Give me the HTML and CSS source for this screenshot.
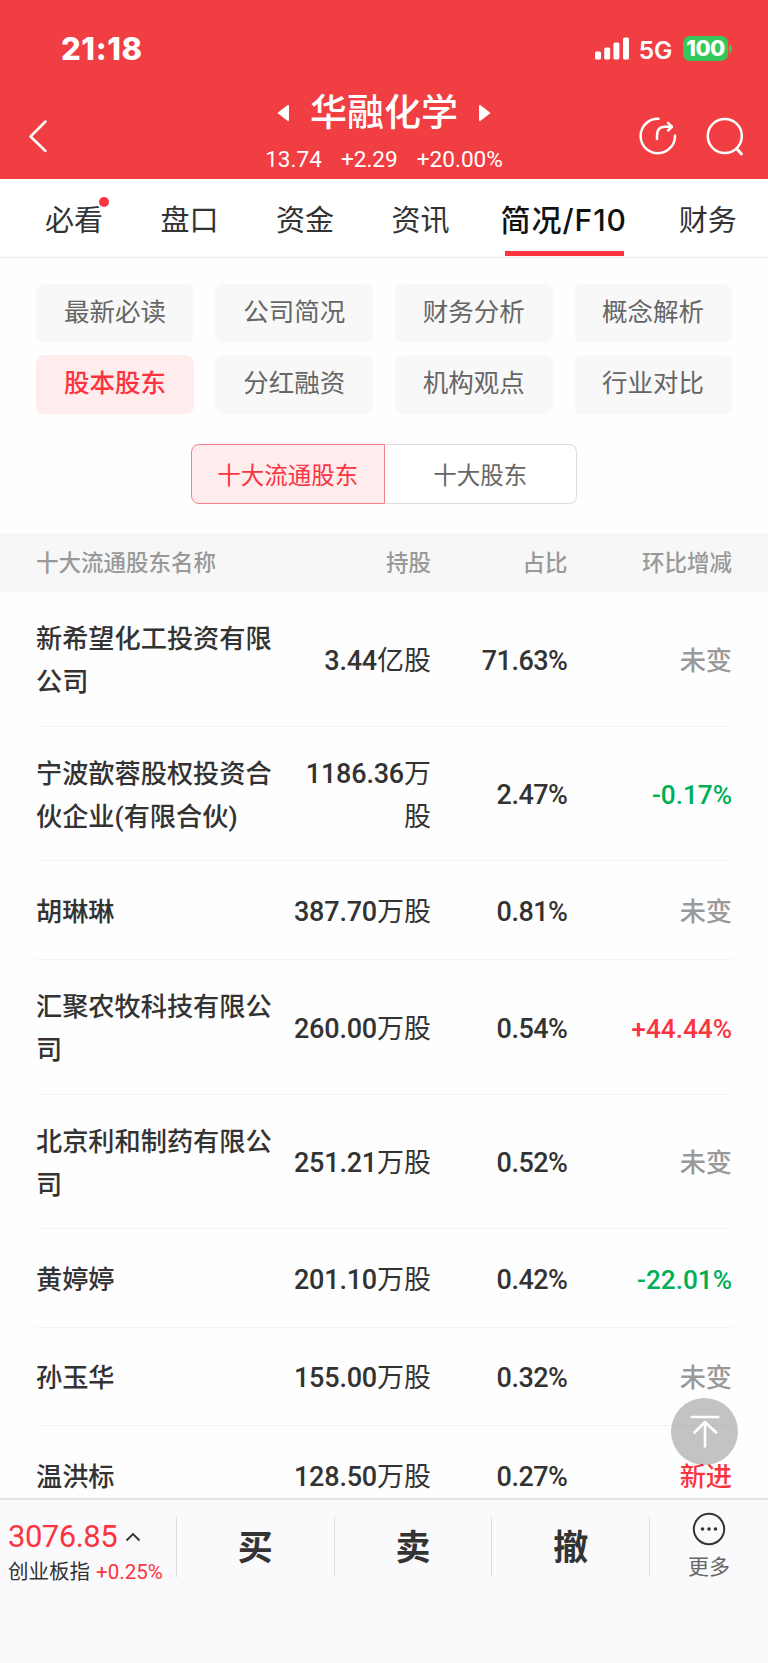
FILE: index.html
```html
<!DOCTYPE html>
<html lang="zh-CN">
<head>
    <meta charset="UTF-8">
    <meta name="viewport" content="width=device-width, initial-scale=1.0">
    <title>华融化学 - 股本股东</title>
    <link rel="stylesheet" href="styles.css">
</head>
<body>
    <header class="header">
        <div class="status-bar">
            <span class="clock">21:18</span>
            <div class="status-right">
                <svg class="signal" width="34" height="23" viewBox="0 0 34 23" fill="#fff">
                    <rect x="0" y="14.500" width="6" height="8" rx="1.600"/>
                    <rect x="9.200" y="10.500" width="6" height="12" rx="1.600"/>
                    <rect x="18.400" y="5.500" width="6" height="17" rx="1.600"/>
                    <rect x="28" y="0.500" width="6" height="22" rx="1.600"/>
                </svg>
                <span class="network">5G</span>
                <span class="battery">100</span>
                <span class="battery-tip"></span>
            </div>
        </div>
        <div class="title-bar">
            <div class="title-left">
                <svg width="20" height="34" viewBox="0 0 20 34" fill="none" stroke="#fff" stroke-width="2.500" stroke-linecap="round" stroke-linejoin="round">
                    <path d="M17.500 2.500L2.500 17.500L17.500 32"/>
                </svg>
            </div>
            <div class="title-center">
                <div class="stock-row">
                    <svg width="13" height="18" viewBox="0 0 13 18" fill="#fff" stroke="#fff" stroke-width="1.500" stroke-linejoin="round"><path d="M11.200 1.700V16.300L1.500 9Z"/></svg>
                    <h1>华融化学</h1>
                    <svg width="13" height="18" viewBox="0 0 13 18" fill="#fff" stroke="#fff" stroke-width="1.500" stroke-linejoin="round"><path d="M1.800 1.700V16.300L11.500 9Z"/></svg>
                </div>
                <div class="quote">
                    <span>13.74</span>
                    <span>+2.29</span>
                    <span>+20.00%</span>
                </div>
            </div>
            <div class="title-right">
                <svg width="38" height="38" viewBox="0 0 38 38" fill="none" stroke="#fff" stroke-width="2.500" stroke-linecap="round" stroke-linejoin="round">
                    <path d="M19.500 1.800A17.200 17.200 0 1 0 36 18.500"/>
                    <path d="M18 22V18.500C18 13 21 9.800 26 9.800H32.500"/>
                    <path d="M29 5.800L33 9.800L29 13.500"/>
                </svg>
                <svg width="38" height="40" viewBox="0 0 38 40" fill="none" stroke="#fff" stroke-width="2.500" stroke-linecap="round">
                    <circle cx="18.800" cy="19" r="17"/>
                    <path d="M30.500 31.500L35.500 37" stroke-width="3"/>
                </svg>
            </div>
        </div>
    </header>

    <nav class="tabs">
        <a class="tab has-dot">必看</a>
        <a class="tab">盘口</a>
        <a class="tab">资金</a>
        <a class="tab">资讯</a>
        <a class="tab active">简况/F10</a>
        <a class="tab">财务</a>
    </nav>

    <main class="content">
        <div class="menu">
            <a class="menu-item">最新必读</a>
            <a class="menu-item">公司简况</a>
            <a class="menu-item">财务分析</a>
            <a class="menu-item">概念解析</a>
            <a class="menu-item active">股本股东</a>
            <a class="menu-item">分红融资</a>
            <a class="menu-item">机构观点</a>
            <a class="menu-item">行业对比</a>
        </div>

        <div class="switch">
            <button class="switch-btn active">十大流通股东</button>
            <button class="switch-btn">十大股东</button>
        </div>

        <div class="row row-head">
            <span>十大流通股东名称</span>
            <span>持股</span>
            <span>占比</span>
            <span>环比增减</span>
        </div>
        <div class="list">
            <div class="row">
                <span class="name">新希望化工投资有限公司</span>
                <span class="shares"><b>3.44</b>亿股</span>
                <span class="ratio">71.63%</span>
                <span class="change">未变</span>
            </div>
            <div class="row">
                <span class="name">宁波歆蓉股权投资合伙企业(有限合伙)</span>
                <span class="shares"><b>1186.36</b>万股</span>
                <span class="ratio">2.47%</span>
                <span class="change down">-0.17%</span>
            </div>
            <div class="row">
                <span class="name">胡琳琳</span>
                <span class="shares"><b>387.70</b>万股</span>
                <span class="ratio">0.81%</span>
                <span class="change">未变</span>
            </div>
            <div class="row">
                <span class="name">汇聚农牧科技有限公司</span>
                <span class="shares"><b>260.00</b>万股</span>
                <span class="ratio">0.54%</span>
                <span class="change up">+44.44%</span>
            </div>
            <div class="row">
                <span class="name">北京利和制药有限公司</span>
                <span class="shares"><b>251.21</b>万股</span>
                <span class="ratio">0.52%</span>
                <span class="change">未变</span>
            </div>
            <div class="row">
                <span class="name">黄婷婷</span>
                <span class="shares"><b>201.10</b>万股</span>
                <span class="ratio">0.42%</span>
                <span class="change down">-22.01%</span>
            </div>
            <div class="row">
                <span class="name">孙玉华</span>
                <span class="shares"><b>155.00</b>万股</span>
                <span class="ratio">0.32%</span>
                <span class="change">未变</span>
            </div>
            <div class="row">
                <span class="name">温洪标</span>
                <span class="shares"><b>128.50</b>万股</span>
                <span class="ratio">0.27%</span>
                <span class="change up">新进</span>
            </div>
        </div>
    </main>

    <div class="back-top">
        <svg width="30" height="34" viewBox="0 0 30 34" fill="none" stroke="#fff" stroke-width="2.600" stroke-linecap="round" stroke-linejoin="round">
            <path d="M1.800 2H28.200M15 31.500V7.500M4.500 17.500L15 7L26 17.500"/>
        </svg>
    </div>

    <footer class="bottom-bar">
        <div class="index">
            <div class="index-value">3076.85
                <svg width="16" height="10" viewBox="0 0 16 10" fill="none" stroke="#333" stroke-width="1.800"><path d="M1.500 8.500L8 2L14.500 8.500"/></svg>
            </div>
            <div class="index-name">创业板指 <span class="index-pct">+0.25%</span></div>
        </div>
        <a class="action">买</a>
        <a class="action">卖</a>
        <a class="action">撤</a>
        <a class="more">
            <svg width="34" height="34" viewBox="0 0 34 34" fill="none" stroke="#333" stroke-width="2">
                <circle cx="17" cy="17" r="15.200"/>
                <g fill="#333" stroke="none"><circle cx="10.500" cy="17" r="1.800"/><circle cx="17" cy="17" r="1.800"/><circle cx="23.500" cy="17" r="1.800"/></g>
            </svg>
            <span>更多</span>
        </a>
    </footer>
</body>
</html>
```
FILE: styles.css
```css
* {
    box-sizing: border-box;
}

body {
    margin: 0;
    height: 1663px;
    overflow: hidden;
    position: relative;
    background-color: #fefefe;
    color: #333;
    font-family: Roboto, "Noto Sans CJK SC", sans-serif;
}

svg {
    display: block;
    flex-shrink: 0;
}

.header {
    height: 179px;
    background-color: #f03e42;
    color: #fff;
}

.status-bar {
    height: 88px;
    padding: 9px 36px 0 61px;
    display: flex;
    justify-content: space-between;
    align-items: center;
    font-family: Inter, sans-serif;
}

.clock {
    font-size: 31px;
    font-weight: 800;
    letter-spacing: 0.6px;
}

.status-right {
    display: flex;
    align-items: center;
}

.network {
    margin: 2px 11px 0 10px;
    font-size: 24.5px;
    font-weight: 600;
    letter-spacing: -0.3px;
}

.battery {
    width: 45px;
    height: 25px;
    line-height: 25px;
    border-radius: 7px;
    background-color: #35c759;
    text-align: center;
    font-size: 22px;
    font-weight: 800;
    letter-spacing: -0.5px;
}

.battery-tip {
    width: 3px;
    height: 8px;
    margin-left: 1px;
    border-radius: 0 4px 4px 0;
    background-color: #35c759;
}

.title-bar {
    height: 91px;
    display: grid;
    grid-template-columns: 180px 1fr 180px;
}

.title-left {
    padding: 31px 0 0 28px;
}

.stock-row {
    height: 50px;
    display: flex;
    justify-content: center;
    align-items: center;
    gap: 20px;
}

.stock-row h1 {
    margin: 0;
    padding-top: 2px;
    font-size: 37px;
    line-height: 50px;
    font-weight: 500;
}

.quote {
    display: flex;
    justify-content: center;
    gap: 19px;
    font-size: 22.6px;
    line-height: 43px;
}

.title-right {
    display: flex;
    gap: 29px;
    padding: 29px 0 0 51px;
}

.tabs {
    height: 79px;
    padding-left: 45px;
    display: flex;
    border-bottom: 1px solid #ebebeb;
    background-color: #fff;
}

.tab {
    position: relative;
    margin-right: 57.5px;
    font-size: 29px;
    line-height: 84px;
    white-space: nowrap;
}

.tab:nth-child(4) {
    margin-right: 51px;
}

.tab.active {
    margin-right: 52px;
    font-family: Inter, "Noto Sans CJK SC", sans-serif;
    font-size: 30px;
    line-height: 82px;
    font-weight: 500;
    letter-spacing: 0.95px;
    color: #111;
}

.tab.active::after {
    content: "";
    position: absolute;
    left: 4px;
    right: 3px;
    bottom: 1px;
    height: 5px;
    background-color: #fb3440;
}

.has-dot::after {
    content: "";
    position: absolute;
    top: 18px;
    right: -6px;
    width: 10px;
    height: 10px;
    border-radius: 50%;
    background-color: #fb3440;
}

.menu {
    padding: 26px 36px 0;
    display: grid;
    grid-template-columns: repeat(4, 158px);
    justify-content: space-between;
    row-gap: 12px;
}

.menu-item {
    height: 59px;
    line-height: 57px;
    border-radius: 8px;
    background-color: #f8f8f8;
    text-align: center;
    font-size: 25.5px;
    color: #666;
}

.menu-item.active {
    background-color: #ffedee;
    color: #fb3440;
    font-weight: 500;
}

.switch {
    width: 386px;
    margin: 30px auto 29px;
    display: flex;
}

.switch-btn {
    flex: 1;
    height: 60px;
    padding: 0 0 1px;
    border: 1px solid #dedede;
    border-left: none;
    border-radius: 0 8px 8px 0;
    background-color: #fff;
    font-family: inherit;
    font-size: 23.5px;
    color: #666;
}

.switch-btn.active {
    border: 1px solid #f98088;
    border-radius: 8px 0 0 8px;
    background-color: #ffedee;
    color: #fb3440;
}

.row {
    min-height: 98.5px;
    padding: 26px 0 21.3px;
    display: grid;
    grid-template-columns: 240px 155px 136.5px 1fr;
    align-items: center;
    border-bottom: 1px solid #f4f4f4;
    font-size: 27px;
    line-height: 43.2px;
    text-align: right;
}

.list {
    padding: 0 36px;
}

.row-head {
    min-height: 59px;
    padding: 2px 36px 0;
    border: none;
    background-color: #f7f7f7;
    color: #999;
    font-size: 22.5px;
    font-weight: 500;
}

.row-head :first-child {
    text-align: left;
}

.name {
    font-size: 26.2px;
    font-weight: 500;
    text-align: left;
}

.shares {
    padding-left: 12px;
}

.shares b {
    font-weight: 500;
    letter-spacing: -0.2px;
}

.ratio {
    font-weight: 500;
    letter-spacing: -0.5px;
}

.change {
    font-size: 26.2px;
    font-weight: 500;
    color: #999;
}

.change.up {
    color: #fb3440;
}

.change.down {
    color: #00ae58;
}

.back-top {
    position: absolute;
    left: 671px;
    top: 1398px;
    width: 67px;
    height: 67px;
    display: flex;
    justify-content: center;
    align-items: center;
    border-radius: 50%;
    background-color: rgba(0, 0, 0, 0.23);
}

.bottom-bar {
    position: absolute;
    left: 0;
    right: 0;
    bottom: 0;
    height: 165px;
    padding-top: 17px;
    display: flex;
    align-items: flex-start;
    border-top: 2px solid #e2e2e6;
    background-color: #fafafc;
}

.index {
    width: 176px;
    padding-left: 8px;
    white-space: nowrap;
}

.index-value {
    display: flex;
    align-items: center;
    gap: 8px;
    font-size: 31px;
    line-height: 39px;
    letter-spacing: -0.5px;
    color: #fb3440;
}

.index-name {
    font-size: 20.5px;
    line-height: 33px;
}

.index-pct {
    margin-left: 1px;
    color: #fb3440;
}

.action {
    width: 157.7px;
    height: 60px;
    line-height: 63px;
    border-left: 1px solid #dcdcdf;
    text-align: center;
    font-size: 35px;
    font-weight: 700;
}

.more {
    flex: 1;
    height: 60px;
    border-left: 1px solid #dcdcdf;
    display: flex;
    flex-direction: column;
    align-items: center;
    font-size: 21px;
    line-height: 30px;
    color: #666;
}

.more svg {
    margin-top: -5px;
    margin-bottom: 6px;
}
```
